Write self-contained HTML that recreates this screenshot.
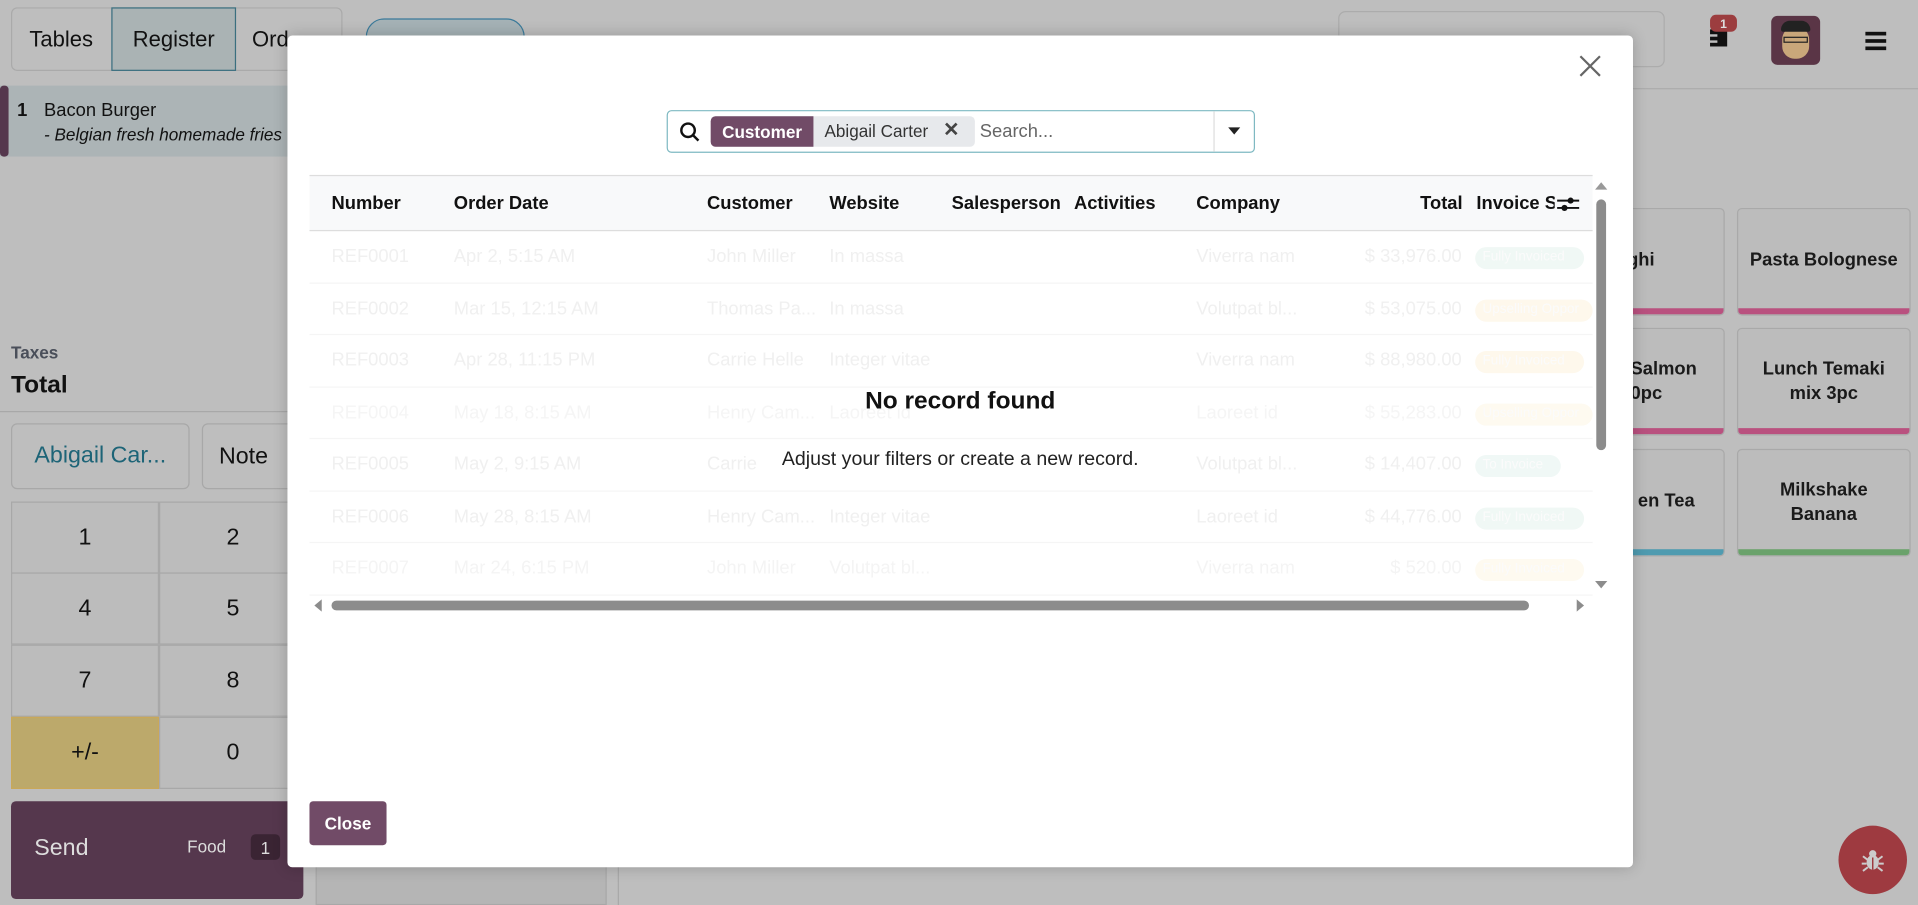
<!DOCTYPE html>
<html><head><meta charset="utf-8">
<style>
*{box-sizing:border-box;margin:0;padding:0}
html,body{width:1918px;height:892px;overflow:hidden;background:#bebebe}
#w{position:absolute;left:0;top:0;width:1568px;height:729px;transform:scale(1.22321);transform-origin:0 0;font-family:"Liberation Sans",sans-serif;color:#111}
.a{position:absolute}
.c{display:flex;align-items:center;justify-content:center}
.card{position:absolute;background:#bcbcbc;border:1px solid #a9a9a9;border-radius:4px;font-size:15px;font-weight:bold;text-align:center;color:#1a1a1a;overflow:hidden}
.card i{position:absolute;left:0;right:0;bottom:0;height:5px}
.np{position:absolute;width:121px;height:59px;border:1px solid #a8a8a8;background:#bcbcbc;font-size:19px}
.row{position:absolute;left:253px;width:1049px;height:42.5px;border-bottom:1px solid #f5f5f5;color:#f0f0f0;font-size:15px}
.row span{position:absolute;top:12px;white-space:nowrap}
.h span{position:absolute;top:14px;font-weight:bold;font-size:15px;color:#111;white-space:nowrap}
.pill{position:absolute;top:13px;height:18px;border-radius:9px;font-size:11px;color:#fbfbfb;padding:2px 6px;width:89px;overflow:hidden;white-space:nowrap}
</style></head><body><div id="w">
<div class="a" style="left:0;top:72px;width:1568px;height:1px;background:#acacac"></div>
<div class="a" style="left:9px;top:6px;width:271px;height:52px;border:1px solid #aaa;border-radius:5px"></div>
<div class="a c" style="left:9px;top:6px;width:82px;height:52px;font-size:18px">Tables</div>
<div class="a c" style="left:91px;top:6px;width:102px;height:52px;font-size:18px;background:#aab3b4;border:1px solid #3b6f7f">Register</div>
<div class="a" style="left:206px;top:22px;font-size:18px">Ord</div>
<div class="a" style="left:299px;top:15px;width:130px;height:30px;border:1px solid #3a7a9a;border-radius:15px;background:#a5b2b6"></div>
<div class="a" style="left:0;top:70px;width:248px;height:58px;background:#acb4b6"></div>
<div class="a" style="left:0;top:70px;width:7px;height:58px;background:#55374d;border-radius:3px"></div>
<div class="a" style="left:14px;top:82px;font-size:15px;font-weight:bold">1</div>
<div class="a" style="left:36px;top:82px;font-size:15px">Bacon Burger</div>
<div class="a" style="left:36px;top:102px;font-size:14px;font-style:italic">- Belgian fresh homemade fries</div>
<div class="a" style="left:9px;top:280px;font-size:14px;font-weight:bold;color:#4a4f5a">Taxes</div>
<div class="a" style="left:9px;top:304px;font-size:20px;font-weight:bold">Total</div>
<div class="a" style="left:0;top:336px;width:248px;height:1px;background:#a8a8a8"></div>
<div class="a c" style="left:9px;top:346px;width:146px;height:54px;border:1px solid #a8a8a8;border-radius:5px;font-size:19px;color:#1d6477">Abigail Car...</div>
<div class="a" style="left:165px;top:346px;width:90px;height:54px;border:1px solid #a8a8a8;border-radius:5px;font-size:19px;padding:16px 0 0 13px">Note</div>
<div class="np c" style="left:9px;top:410px">1</div><div class="np c" style="left:130px;top:410px">2</div>
<div class="np c" style="left:9px;top:468px">4</div><div class="np c" style="left:130px;top:468px">5</div>
<div class="np c" style="left:9px;top:527px">7</div><div class="np c" style="left:130px;top:527px">8</div>
<div class="np c" style="left:9px;top:586px;background:#bca96b;border-color:#c9a85a">+/-</div><div class="np c" style="left:130px;top:586px">0</div>
<div class="a" style="left:9px;top:655px;width:239px;height:80px;background:#55374d;border-radius:4px"></div>
<div class="a" style="left:28px;top:683px;font-size:19px;color:#ddd">Send</div>
<div class="a" style="left:153px;top:684px;font-size:14px;color:#ddd">Food</div>
<div class="a c" style="left:205px;top:682px;width:24px;height:21px;background:#3a2433;border-radius:4px;color:#ddd;font-size:14px">1</div>
<div class="a" style="left:258px;top:700px;width:238px;height:40px;border:1px solid #a8a8a8;background:#b5b5b5"></div>
<div class="a" style="left:505px;top:700px;width:1px;height:40px;background:#a8a8a8"></div>
<div class="a" style="left:1094px;top:9px;width:267px;height:46px;border:1px solid #acacac;border-radius:6px"></div>
<svg class="a" style="left:1392px;top:12px" width="34" height="36"><rect x="6" y="12" width="14" height="14" fill="#111"/><rect x="2" y="16" width="10" height="2" fill="#bebebe"/><rect x="2" y="21" width="10" height="2" fill="#bebebe"/><rect x="6" y="0" width="22" height="14" rx="5" fill="#9c3d3f"/><text x="17" y="11" font-size="10" font-weight="bold" fill="#ddd" text-anchor="middle" font-family="Liberation Sans">1</text></svg>
<div class="a" style="left:1448px;top:13px;width:40px;height:40px;border-radius:5px;background:#5a3546;overflow:hidden"><div class="a" style="left:9px;top:9px;width:22px;height:26px;border-radius:10px;background:#c9a77a"></div><div class="a" style="left:8px;top:4px;width:24px;height:9px;background:#222;border-radius:8px 8px 2px 2px"></div><div class="a" style="left:10px;top:17px;width:20px;height:5px;border:1px solid #222"></div></div>
<div class="a" style="left:1525px;top:26px;width:17px;height:3px;background:#111;box-shadow:0 6px 0 #111,0 12px 0 #111"></div>
<div class="card" style="left:1310px;top:170px;width:100px;height:88px"><span class="a" style="left:10px;top:33px">nghi</span><i style="background:#b9517f"></i></div>
<div class="card" style="left:1420px;top:170px;width:142px;height:88px"><span class="a" style="left:0;right:0;top:33px">Pasta Bolognese</span><i style="background:#b9517f"></i></div>
<div class="card" style="left:1310px;top:268px;width:100px;height:88px"><span class="a" style="left:22px;top:23px;text-align:left;line-height:20px">Salmon<br>0pc</span><i style="background:#b9517f"></i></div>
<div class="card" style="left:1420px;top:268px;width:142px;height:88px"><span class="a" style="left:0;right:0;top:23px;line-height:20px">Lunch Temaki<br>mix 3pc</span><i style="background:#b9517f"></i></div>
<div class="card" style="left:1310px;top:367px;width:100px;height:88px"><span class="a" style="left:28px;top:33px">en Tea</span><i style="background:#4f9bb0"></i></div>
<div class="card" style="left:1420px;top:367px;width:142px;height:88px"><span class="a" style="left:0;right:0;top:23px;line-height:20px">Milkshake<br>Banana</span><i style="background:#6aa26b"></i></div>
<div class="a c" style="left:1503px;top:675px;width:56px;height:56px;border-radius:50%;background:#9e3a40"><svg width="22" height="22" viewBox="0 0 22 22"><ellipse cx="11" cy="13" rx="5" ry="6" fill="#ccc"/><circle cx="11" cy="6" r="3" fill="#ccc"/><path d="M3 8l4 3M19 8l-4 3M2 14h4M20 14h-4M3 20l4-3M19 20l-4-3" stroke="#ccc" stroke-width="1.6"/><path d="M11 9v10" stroke="#9e3a40" stroke-width="1.2"/></svg></div>
<div class="a" style="left:235px;top:29px;width:1100px;height:680px;background:#fff;border-radius:4px;box-shadow:0 0 12px rgba(0,0,0,.2)"></div>
<svg class="a" style="left:1290px;top:44px" width="20" height="20"><path d="M2 2L18 18M18 2L2 18" stroke="#666" stroke-width="1.8"/></svg>
<div class="a" style="left:545px;top:90px;width:481px;height:35px;border:1px solid #7fb9c2;border-radius:4px"></div>
<svg class="a" style="left:555px;top:99px" width="18" height="18"><circle cx="7.5" cy="7.5" r="5.5" fill="none" stroke="#111" stroke-width="2"/><path d="M11.5 11.5L16 16" stroke="#111" stroke-width="2"/></svg>
<div class="a" style="left:581px;top:95px;width:216px;height:25px;background:#e7e9ec;border-radius:4px"></div>
<div class="a c" style="left:581px;top:95px;width:84px;height:25px;background:#714b67;border-radius:4px 0 0 4px;color:#fff;font-weight:bold;font-size:14px">Customer</div>
<div class="a" style="left:674px;top:99px;font-size:14px;color:#333">Abigail Carter</div>
<div class="a" style="left:771px;top:96px;font-size:16px;color:#444;font-weight:bold">✕</div>
<div class="a" style="left:801px;top:99px;font-size:15px;color:#666">Search...</div>
<div class="a" style="left:992px;top:91px;width:1px;height:33px;background:#ddd"></div>
<svg class="a" style="left:1004px;top:104px" width="10" height="6"><path d="M0 0h10L5 6z" fill="#222"/></svg>
<div class="a h" style="left:253px;top:143px;width:1049px;height:46px;background:#f8f9fa;border-top:1px solid #ddd;border-bottom:1px solid #ddd">
<span style="left:18px">Number</span><span style="left:118px">Order Date</span><span style="left:325px">Customer</span><span style="left:425px">Website</span><span style="left:525px">Salesperson</span><span style="left:625px">Activities</span><span style="left:725px">Company</span><span style="left:908px">Total</span><span style="left:954px;width:64px;overflow:hidden">Invoice S</span>
<svg class="a" style="left:1019px;top:15px" width="20" height="16"><path d="M1 5h18M1 11h18" stroke="#111" stroke-width="1.6"/><circle cx="12" cy="5" r="2.5" fill="#111"/><circle cx="7" cy="11" r="2.5" fill="#111"/></svg></div>
<div class="row" style="top:189px"><span style="left:18px">REF0001</span><span style="left:118px">Apr 2, 5:15 AM</span><span style="left:325px">John Miller</span><span style="left:425px">In massa</span><span style="left:725px">Viverra nam</span><span style="right:107px">$ 33,976.00</span><div class="pill" style="left:953px;background:#f0f8f5">Fully Invoiced</div></div>
<div class="row" style="top:231.5px"><span style="left:18px">REF0002</span><span style="left:118px">Mar 15, 12:15 AM</span><span style="left:325px">Thomas Pa...</span><span style="left:425px">In massa</span><span style="left:725px">Volutpat bl...</span><span style="right:107px">$ 53,075.00</span><div class="pill" style="left:953px;background:#fef8ec;width:96px">Upselling Oppor</div></div>
<div class="row" style="top:274px"><span style="left:18px">REF0003</span><span style="left:118px">Apr 28, 11:15 PM</span><span style="left:325px">Carrie Helle</span><span style="left:425px">Integer vitae</span><span style="left:725px">Viverra nam</span><span style="right:107px">$ 88,980.00</span><div class="pill" style="left:953px;background:#fef8ec">Fully Invoiced</div></div>
<div class="row" style="top:316.5px;color:#f5f5f5"><span style="left:18px">REF0004</span><span style="left:118px">May 18, 8:15 AM</span><span style="left:325px">Henry Cam...</span><span style="left:425px">Laoreet id</span><span style="left:725px">Laoreet id</span><span style="right:107px">$ 55,283.00</span><div class="pill" style="left:953px;background:#fefaf0;width:96px">Upselling Oppor</div></div>
<div class="row" style="top:359px"><span style="left:18px">REF0005</span><span style="left:118px">May 2, 9:15 AM</span><span style="left:325px">Carrie</span><span style="left:725px">Volutpat bl...</span><span style="right:107px">$ 14,407.00</span><div class="pill" style="left:953px;background:#f0f8f6;width:70px">To Invoice</div></div>
<div class="row" style="top:401.5px"><span style="left:18px">REF0006</span><span style="left:118px">May 28, 8:15 AM</span><span style="left:325px">Henry Cam...</span><span style="left:425px">Integer vitae</span><span style="left:725px">Laoreet id</span><span style="right:107px">$ 44,776.00</span><div class="pill" style="left:953px;background:#f0f8f5">Fully Invoiced</div></div>
<div class="row" style="top:444px;color:#f4f4f4"><span style="left:18px">REF0007</span><span style="left:118px">Mar 24, 6:15 PM</span><span style="left:325px">John Miller</span><span style="left:425px">Volutpat bl...</span><span style="left:725px">Viverra nam</span><span style="right:107px">$ 520.00</span><div class="pill" style="left:953px;background:#fefaf0">Fully Invoiced</div></div>
<div class="a" style="left:253px;top:317px;width:1064px;text-align:center;font-size:20px;font-weight:bold">No record found</div>
<div class="a" style="left:253px;top:367px;width:1064px;text-align:center;font-size:16px;color:#222">Adjust your filters or create a new record.</div>
<svg class="a" style="left:1303px;top:146px" width="12" height="340"><path d="M1 9h10L6 3z" fill="#999"/><rect x="2" y="17" width="8" height="205" rx="4" fill="#8c8c8c"/><path d="M1 329h10l-5 6z" fill="#8c8c8c"/></svg>
<svg class="a" style="left:255px;top:489px" width="1046" height="12"><path d="M8 1v10L2 6z" fill="#8c8c8c"/><rect x="16" y="2" width="979" height="8" rx="4" fill="#8c8c8c"/><path d="M1034 1v10l6-5z" fill="#8c8c8c"/></svg>
<div class="a c" style="left:253px;top:655px;width:63px;height:36px;background:#714b67;border-radius:3px;color:#fff;font-weight:bold;font-size:14px">Close</div>
</div></body></html>
